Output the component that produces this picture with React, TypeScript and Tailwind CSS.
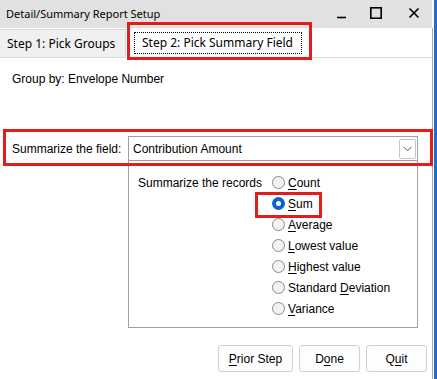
import React from "react";

const ui = { fontFamily: '"Noto Sans", "Open Sans", sans-serif' };
const ms = { fontFamily: '"Liberation Sans", Arial, sans-serif' };

function Radio({ checked }: { checked?: boolean }) {
  return checked ? (
    <span className="w-[13px] h-[13px] rounded-full bg-[#0a64c8] flex items-center justify-center shrink-0">
      <span className="w-[5px] h-[5px] rounded-full bg-white" />
    </span>
  ) : (
    <span className="w-[13px] h-[13px] rounded-full border border-[#8a8a8a] bg-[#f2f2f2] shrink-0" />
  );
}

function Opt({ pre, u, post, checked }: { pre?: string; u: string; post?: string; checked?: boolean }) {
  return (
    <div className="h-[21px] flex items-center gap-[3px]">
      <Radio checked={checked} />
      <span>
        {pre}
        <span className="underline underline-offset-2">{u}</span>
        {post}
      </span>
    </div>
  );
}

export default function App() {
  return (
    <div className="w-[437px] h-[379px] bg-white flex relative overflow-hidden text-black">
      <div className="w-[432px] h-full flex flex-col">
        {/* title bar */}
        <div className="h-[28px] bg-[#e1e1e1] flex items-center pl-[6px] relative text-[11px]" style={ui}>
          <span>Detail/Summary Report Setup</span>
          <svg className="absolute left-[336px] top-[7px]" width="90" height="14" viewBox="0 0 90 14">
            <line x1="1" y1="10.5" x2="10" y2="10.5" stroke="#000" strokeWidth="1.6" />
            <rect x="34.8" y="0.8" width="10.4" height="10.4" fill="none" stroke="#000" strokeWidth="1.6" />
            <line x1="73.5" y1="1.5" x2="82.5" y2="10.5" stroke="#000" strokeWidth="1.6" />
            <line x1="82.5" y1="1.5" x2="73.5" y2="10.5" stroke="#000" strokeWidth="1.6" />
          </svg>
        </div>
        {/* tabs */}
        <div className="h-[30px] flex items-end border-b border-[#d9d9d9] text-[12px]" style={ui}>
          <div className="h-[28px] w-[126px] bg-[#f0f0f0] border-t border-r border-[#d9d9d9] flex items-center pl-[7px]">
            Step 1: Pick Groups
          </div>
          <div className="h-[30px] w-[184px] bg-white flex items-center justify-center border-r border-[#d9d9d9] -mb-px">
            <span className="h-[22px] w-[168px] border border-dotted border-black flex items-center justify-center">
              Step 2: Pick Summary Field
            </span>
          </div>
        </div>
        {/* content */}
        <div className="flex flex-col text-[12px]" style={ms}>
          <div className="pl-[12px] mt-[14px] h-[14px] leading-[14px]">Group by: Envelope Number</div>
          <div className="mt-[50px] flex items-center h-[25px]">
            <div className="w-[128px] pl-[12px]">Summarize the field:</div>
            <div className="w-[290px] h-[25px] border border-[#a0a0a0] flex items-center justify-between pl-[4px] pr-px">
              <span>Contribution Amount</span>
              <span className="w-[17px] h-[20px] border border-[#c6c6c6] rounded-[2px] flex items-center justify-center">
                <svg width="9" height="6" viewBox="0 0 9 6">
                  <polyline points="0.5,0.8 4.5,4.8 8.5,0.8" fill="none" stroke="#555" strokeWidth="1" />
                </svg>
              </span>
            </div>
          </div>
          <div className="ml-[128px] w-[290px] h-[167px] border border-t-0 border-[#a0a0a0] flex pt-[11px] pl-[9px]">
            <div className="w-[134px] h-[21px] flex items-center">Summarize the records</div>
            <div className="flex flex-col">
              <Opt u="C" post="ount" />
              <Opt u="S" post="um" checked />
              <Opt u="A" post="verage" />
              <Opt u="L" post="owest value" />
              <Opt u="H" post="ighest value" />
              <Opt pre="Standard " u="D" post="eviation" />
              <Opt u="V" post="ariance" />
            </div>
          </div>
          <div className="mt-[17px] flex justify-end gap-[6px] pr-[5px]">
            <button className="w-[75px] h-[27px] rounded-[3px] border border-[#d0d0d0] bg-[#fdfdfd]">
              <span className="underline underline-offset-2">P</span>rior Step
            </button>
            <button className="w-[61px] h-[27px] rounded-[3px] border border-[#d0d0d0] bg-[#fdfdfd]">
              D<span className="underline underline-offset-2">o</span>ne
            </button>
            <button className="w-[61px] h-[27px] rounded-[3px] border border-[#d0d0d0] bg-[#fdfdfd]">
              Q<span className="underline underline-offset-2">u</span>it
            </button>
          </div>
        </div>
      </div>
      <div className="w-px h-full bg-[#a8a8a8] mt-[28px]" />
      <div className="w-px h-full bg-white" />
      <div className="w-[3px] h-full bg-[#1f6fc6]" />

      {/* red annotation boxes */}
      <div className="absolute left-[127px] top-[22px] w-[185px] h-[38px] border-[3px] border-[#e31c1c]" />
      <div className="absolute left-[3px] top-[129px] w-[430px] h-[37px] border-[3px] border-[#e31c1c]" />
      <div className="absolute left-[255px] top-[192px] w-[67px] h-[26px] border-[3px] border-[#e31c1c]" />
    </div>
  );
}
